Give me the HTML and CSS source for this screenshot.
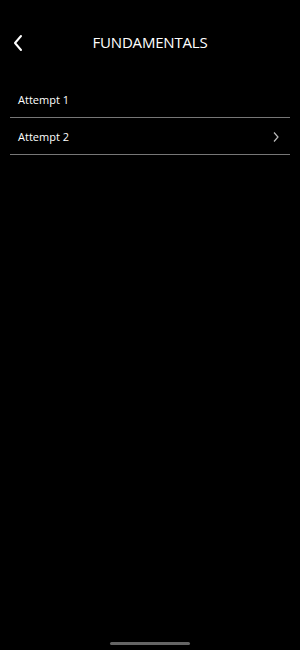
FILE: index.html
```html
<!DOCTYPE html>
<html>
<head>
<meta charset="utf-8">
<link rel="stylesheet" href="styles.css">
</head>
<body>
<div class="screen">
  <header class="header">
    <svg class="back" width="12" height="18" viewBox="0 0 12 18"><path d="M9 2 L3 9 L9 16" fill="none" stroke="#fff" stroke-width="2" stroke-linecap="round" stroke-linejoin="round"/></svg>
    <h1 class="title">FUNDAMENTALS</h1>
  </header>
  <ul class="list">
    <li class="row"><span>Attempt 1</span></li>
    <li class="row"><span>Attempt 2</span>
      <svg class="chev" width="8" height="12" viewBox="0 0 8 12"><path d="M2 1.5 L6 6 L2 10.5" fill="none" stroke="#bbb" stroke-width="1.2"/></svg>
    </li>
  </ul>
  <div class="spacer"></div>
  <div class="home-bar"></div>
</div>
</body>
</html>
```
FILE: styles.css
```css
html, body {
  margin: 0;
  padding: 0;
  background: #000;
}
body {
  font-family: "Open Sans", "Liberation Sans", sans-serif;
  color: #fff;
}
.screen {
  width: 300px;
  height: 650px;
  display: flex;
  flex-direction: column;
  position: relative;
}
.header {
  height: 46px;
  margin-top: 20px;
  display: flex;
  align-items: center;
  justify-content: center;
  position: relative;
}
.back {
  position: absolute;
  left: 12px;
  top: 14px;
}
.title {
  margin: 0;
  font-size: 15px;
  font-weight: 500;
  letter-spacing: -0.2px;
  line-height: 46px;
  margin-top: -2px;
}
.list {
  list-style: none;
  margin: 15px 10px 0;
  padding: 0;
}
.row {
  height: 36px;
  border-bottom: 1px solid #777;
  display: flex;
  align-items: center;
  justify-content: space-between;
  padding: 0 10px 0 8px;
  font-size: 11px;
  font-weight: 500;
}
.chev {
  margin-top: 1px;
}
.spacer {
  flex: 1;
}
.home-bar {
  width: 80px;
  height: 3px;
  border-radius: 2px;
  background: #666;
  margin: 0 auto 5px;
}
```
